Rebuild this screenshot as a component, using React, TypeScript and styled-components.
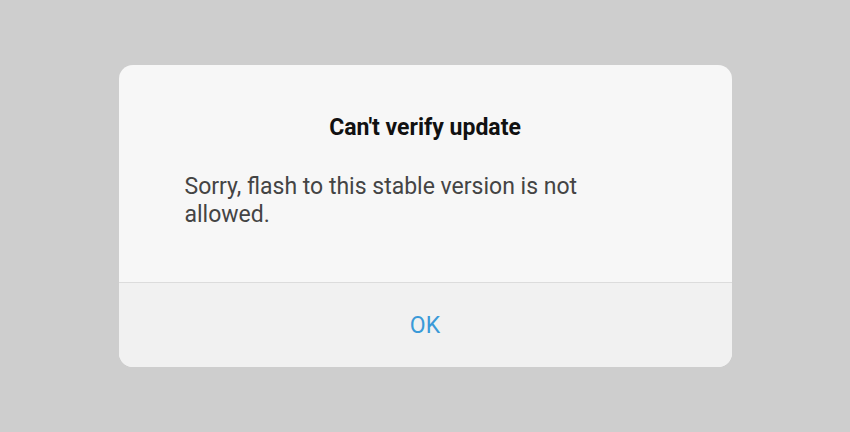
import React from "react";
import styled, {createGlobalStyle} from "styled-components";

const GlobalStyle = createGlobalStyle`
  html, body {
    margin: 0;
    padding: 0;
    background-color: #cecece;
    font-family: Roboto, "Liberation Sans", sans-serif;
  }
`

export default function App() {
    return (<>
            <GlobalStyle/>
            <Screen>
                <Dialog>
                    <DialogBody>
                        <Title>Can't verify update</Title>
                        <Message>Sorry, flash to this stable version is not allowed.</Message>
                    </DialogBody>
                    <DialogFooter>
                        <OkButton>OK</OkButton>
                    </DialogFooter>
                </Dialog>
            </Screen>
        </>
    );
}

const Screen = styled.div`
  width: 850px;
  height: 432px;
  display: flex;
  align-items: center;
  justify-content: center;
`

const Dialog = styled.div`
  width: 613px;
  height: 302px;
  border-radius: 14px;
  background-color: #f7f7f7;
  overflow: hidden;
  display: flex;
  flex-direction: column;
`

const DialogBody = styled.div`
  height: 218px;
  box-sizing: border-box;
  padding: 48px 66px 0 66px;
  border-bottom: 1px solid #dcdcdc;
`

const Title = styled.h2`
  margin: 0 0 30px;
  text-align: center;
  font-size: 23px;
  font-weight: 700;
  line-height: 30px;
  color: #111;
`

const Message = styled.p`
  margin: 0;
  width: 410px;
  font-size: 23px;
  line-height: 28px;
  color: #444;
`

const DialogFooter = styled.div`
  flex: 1;
  background-color: #f1f1f1;
  display: flex;
  align-items: center;
  justify-content: center;
`

const OkButton = styled.button`
  background: unset;
  border: none;
  padding: 0;
  font-family: inherit;
  font-size: 23px;
  color: #3b9ad8;
`
